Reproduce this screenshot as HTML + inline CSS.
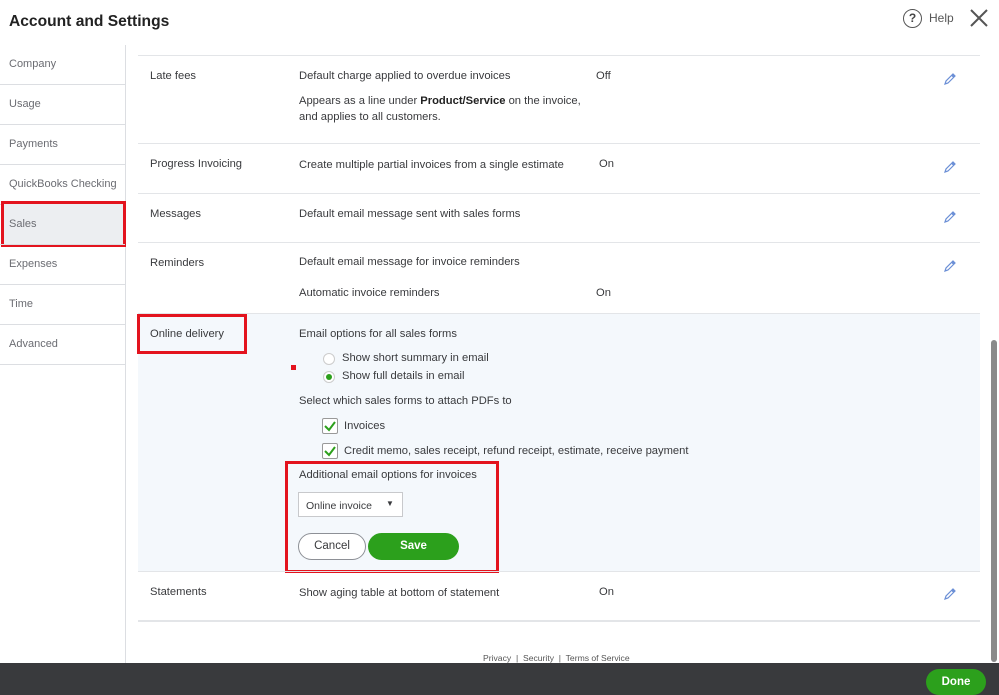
<!DOCTYPE html>
<html><head><style>
*{margin:0;padding:0;box-sizing:border-box}
body{width:999px;height:695px;overflow:hidden;background:#fff;font-family:"Liberation Sans",sans-serif;color:#393a3d;position:relative;font-size:11.2px}
.a{position:absolute;white-space:nowrap}
.hl{position:absolute;left:138px;width:842px;height:1px;background:#e3e5e8}
.sb{position:absolute;left:0;width:125px;height:1px;background:#dcdee2}
.si{position:absolute;left:9px;font-size:11px;color:#6b6c72}
.red{position:absolute;border:3px solid #e3131e}
.pen{position:absolute;width:14px;height:14px}
</style></head><body>
<div class="a" style="left:9px;top:13px;font-size:15.6px;font-weight:bold;color:#222">Account and Settings</div>
<div class="a" style="left:903px;top:9px;width:19px;height:19px;border:1.5px solid #555;border-radius:50%;text-align:center;font-size:12px;line-height:16px;color:#444;font-weight:bold">?</div>
<div class="a" style="left:929px;top:11px;font-size:12px;color:#555">Help</div>
<svg class="a" style="left:969px;top:8px" width="20" height="20"><path d="M2 2L18 18M18 2L2 18" stroke="#555" stroke-width="2"/></svg>

<div class="a" style="left:125px;top:45px;width:1px;height:618px;background:#dcdee2"></div>
<div class="si" style="top:58px">Company</div><div class="sb" style="top:84px"></div>
<div class="si" style="top:98px">Usage</div><div class="sb" style="top:124px"></div>
<div class="si" style="top:138px">Payments</div><div class="sb" style="top:164px"></div>
<div class="si" style="top:178px">QuickBooks Checking</div><div class="sb" style="top:204px"></div>
<div class="a" style="left:2px;top:203px;width:122px;height:42px;background:#eceef1"></div>
<div class="si" style="top:218px">Sales</div>
<div class="red" style="left:1px;top:201px;width:125px;height:46px"></div>
<div class="sb" style="top:244px"></div>
<div class="si" style="top:258px">Expenses</div><div class="sb" style="top:284px"></div>
<div class="si" style="top:298px">Time</div><div class="sb" style="top:324px"></div>
<div class="si" style="top:338px">Advanced</div><div class="sb" style="top:364px"></div>

<div class="hl" style="top:55px"></div>
<div class="a" style="left:150px;top:70px">Late fees</div>
<div class="a" style="left:299px;top:70px">Default charge applied to overdue invoices</div>
<div class="a" style="left:596px;top:70px">Off</div>
<div class="a" style="left:299px;top:95px">Appears as a line under <b style="color:#222">Product/Service</b> on the invoice,</div>
<div class="a" style="left:299px;top:111px">and applies to all customers.</div>
<div class="hl" style="top:143px"></div>
<div class="a" style="left:150px;top:158px">Progress Invoicing</div>
<div class="a" style="left:299px;top:159px">Create multiple partial invoices from a single estimate</div>
<div class="a" style="left:599px;top:158px">On</div>
<div class="hl" style="top:193px"></div>
<div class="a" style="left:150px;top:208px">Messages</div>
<div class="a" style="left:299px;top:208px">Default email message sent with sales forms</div>
<div class="hl" style="top:242px"></div>
<div class="a" style="left:150px;top:257px">Reminders</div>
<div class="a" style="left:299px;top:256px">Default email message for invoice reminders</div>
<div class="a" style="left:299px;top:287px">Automatic invoice reminders</div>
<div class="a" style="left:596px;top:287px">On</div>

<div class="a" style="left:138px;top:313px;width:842px;height:258px;background:#f4f8fc;border-top:1px solid #e3e5e8"></div>
<div class="a" style="left:150px;top:328px">Online delivery</div>
<div class="red" style="left:137px;top:314px;width:110px;height:40px"></div>
<div class="a" style="left:299px;top:328px">Email options for all sales forms</div>
<div class="a" style="left:291px;top:365px;width:5px;height:5px;background:#e3131e"></div>
<div class="a" style="left:323px;top:353px;width:12px;height:12px;border:1px solid #ccc;border-radius:50%;background:#fff"></div>
<div class="a" style="left:342px;top:352px">Show short summary in email</div>
<div class="a" style="left:323px;top:371px;width:12px;height:12px;border:1px solid #ccc;border-radius:50%;background:#fff"><div style="margin:2px;width:6px;height:6px;border-radius:50%;background:#2ca01c"></div></div>
<div class="a" style="left:342px;top:370px">Show full details in email</div>
<div class="a" style="left:299px;top:395px">Select which sales forms to attach PDFs to</div>
<div class="a" style="left:322px;top:418px;width:16px;height:16px;border:1px solid #999;background:#fff;border-radius:2px"><svg width="14" height="14"><path d="M2 7L6 11L12 3" stroke="#2ca01c" stroke-width="2" fill="none"/></svg></div>
<div class="a" style="left:344px;top:420px">Invoices</div>
<div class="a" style="left:322px;top:443px;width:16px;height:16px;border:1px solid #999;background:#fff;border-radius:2px"><svg width="14" height="14"><path d="M2 7L6 11L12 3" stroke="#2ca01c" stroke-width="2" fill="none"/></svg></div>
<div class="a" style="left:344px;top:445px">Credit memo, sales receipt, refund receipt, estimate, receive payment</div>
<div class="a" style="left:299px;top:469px">Additional email options for invoices</div>
<div class="a" style="left:298px;top:492px;width:105px;height:25px;border:1px solid #c8c9cc;background:#fff;font-size:10.5px;padding:7px 0 0 7px">Online invoice<span style="position:absolute;left:87px;top:6px;font-size:8px">▼</span></div>
<div class="a" style="left:298px;top:533px;width:68px;height:27px;border:1px solid #8d9096;border-radius:14px;background:#fff;text-align:center;line-height:25px;font-size:11.5px">Cancel</div>
<div class="a" style="left:368px;top:533px;width:91px;height:27px;border-radius:14px;background:#2ca01c;color:#fff;text-align:center;line-height:27px;font-weight:bold;font-size:11.5px">Save</div>
<div class="red" style="left:285px;top:461px;width:214px;height:112px"></div>

<div class="hl" style="top:571px"></div>
<div class="a" style="left:150px;top:586px">Statements</div>
<div class="a" style="left:299px;top:587px">Show aging table at bottom of statement</div>
<div class="a" style="left:599px;top:586px">On</div>
<div class="hl" style="top:620px;height:2px"></div>

<svg class="pen" style="left:943px;top:72px" viewBox="0 0 14 14"><path d="M2 12L3 9L10 2L12 4L5 11Z" fill="none" stroke="#6b8fd6" stroke-width="1.2"/><path d="M9 3L11 5" stroke="#6b8fd6" stroke-width="2"/></svg>
<svg class="pen" style="left:943px;top:160px" viewBox="0 0 14 14"><path d="M2 12L3 9L10 2L12 4L5 11Z" fill="none" stroke="#6b8fd6" stroke-width="1.2"/><path d="M9 3L11 5" stroke="#6b8fd6" stroke-width="2"/></svg>
<svg class="pen" style="left:943px;top:210px" viewBox="0 0 14 14"><path d="M2 12L3 9L10 2L12 4L5 11Z" fill="none" stroke="#6b8fd6" stroke-width="1.2"/><path d="M9 3L11 5" stroke="#6b8fd6" stroke-width="2"/></svg>
<svg class="pen" style="left:943px;top:259px" viewBox="0 0 14 14"><path d="M2 12L3 9L10 2L12 4L5 11Z" fill="none" stroke="#6b8fd6" stroke-width="1.2"/><path d="M9 3L11 5" stroke="#6b8fd6" stroke-width="2"/></svg>
<svg class="pen" style="left:943px;top:587px" viewBox="0 0 14 14"><path d="M2 12L3 9L10 2L12 4L5 11Z" fill="none" stroke="#6b8fd6" stroke-width="1.2"/><path d="M9 3L11 5" stroke="#6b8fd6" stroke-width="2"/></svg>

<div class="a" style="left:483px;top:653px;font-size:8.6px;color:#555">Privacy &nbsp;|&nbsp; Security &nbsp;|&nbsp; Terms of Service</div>
<div class="a" style="left:991px;top:340px;width:6px;height:322px;background:#8a8a8a;border-radius:3px"></div>
<div class="a" style="left:0;top:663px;width:999px;height:32px;background:#393a3d"></div>
<div class="a" style="left:926px;top:669px;width:60px;height:26px;border-radius:13px;background:#2ca01c;color:#fff;font-weight:bold;text-align:center;line-height:26px;font-size:11.5px">Done</div>
</body></html>
